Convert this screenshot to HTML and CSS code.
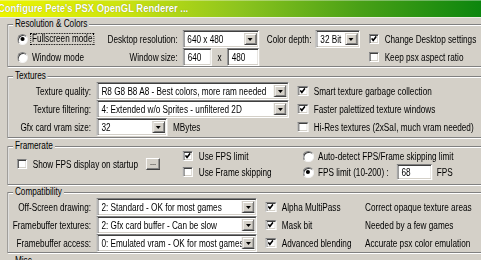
FILE: index.html
```html
<!DOCTYPE html>
<html>
<head>
<meta charset="utf-8">
<title>Configure Pete's PSX OpenGL Renderer</title>
<link rel="stylesheet" href="styles.css">
</head>
<body>
<div class="win">
  <div class="titlebar"><span class="title">Configure Pete's PSX OpenGL Renderer ...</span></div>
  <div class="client">

    <section class="group g-res">
      <span class="legend">Resolution &amp; Colors</span>
      <div class="grid res-grid">
        <div class="opt ro pl"><span class="radio on"></span><span class="focus">Fullscreen mode</span></div>
        <span class="lbl">Desktop resolution:</span>
        <div class="combo w-res"><span class="val">640 x 480</span><span class="arrow"></span></div>
        <span class="lbl lbl-depth">Color depth:</span>
        <div class="combo w-depth"><span class="val">32 Bit</span><span class="arrow"></span></div>
        <div class="opt"><span class="check on"><svg viewBox="0 0 8 8"><path d="M1.2 3.4 L3.1 5.4 L6.9 1.3"/></svg></span>Change Desktop settings</div>

        <div class="opt ro pl"><span class="radio"></span><span class="txt">Window mode</span></div>
        <span class="lbl">Window size:</span>
        <div class="pair"><span class="edit w-640">640</span><span class="x">x</span><span class="edit w-480">480</span></div>
        <span></span>
        <span></span>
        <div class="opt"><span class="check"></span>Keep psx aspect ratio</div>
      </div>
    </section>

    <section class="group g-tex">
      <span class="legend">Textures</span>
      <div class="grid tex-grid">
        <span class="lbl">Texture quality:</span>
        <div class="combo w-wide"><span class="val">R8 G8 B8 A8 - Best colors, more ram needed</span><span class="arrow"></span></div>
        <div class="opt"><span class="check on"><svg viewBox="0 0 8 8"><path d="M1.2 3.4 L3.1 5.4 L6.9 1.3"/></svg></span>Smart texture garbage collection</div>

        <span class="lbl">Texture filtering:</span>
        <div class="combo w-wide"><span class="val">4: Extended w/o Sprites - unfiltered 2D</span><span class="arrow"></span></div>
        <div class="opt"><span class="check on"><svg viewBox="0 0 8 8"><path d="M1.2 3.4 L3.1 5.4 L6.9 1.3"/></svg></span>Faster palettized texture windows</div>

        <span class="lbl">Gfx card vram size:</span>
        <div class="inline"><div class="combo w-vram"><span class="val">32</span><span class="arrow"></span></div><span class="unit">MBytes</span></div>
        <div class="opt"><span class="check"></span>Hi-Res textures (2xSaI, much vram needed)</div>
      </div>
    </section>

    <section class="group g-fps">
      <span class="legend">Framerate</span>
      <div class="grid fps-grid">
        <div class="opt pl span2"><span class="check"></span><span class="txt">Show FPS display on startup</span><span class="btn">...</span></div>
        <div class="opt"><span class="check on"><svg viewBox="0 0 8 8"><path d="M1.2 3.4 L3.1 5.4 L6.9 1.3"/></svg></span>Use FPS limit</div>
        <div class="opt ro"><span class="radio"></span>Auto-detect FPS/Frame skipping limit</div>
        <div class="opt"><span class="check"></span>Use Frame skipping</div>
        <div class="opt ro"><span class="radio on"></span><span class="fpslbl">FPS limit (10-200) :</span><span class="edit w-fps">68</span><span class="unit">FPS</span></div>
      </div>
    </section>

    <section class="group g-cmp">
      <span class="legend">Compatibility</span>
      <div class="grid cmp-grid">
        <span class="lbl">Off-Screen drawing:</span>
        <div class="combo w-cmp"><span class="val">2: Standard - OK for most games</span><span class="arrow"></span></div>
        <div class="opt"><span class="check on"><svg viewBox="0 0 8 8"><path d="M1.2 3.4 L3.1 5.4 L6.9 1.3"/></svg></span>Alpha MultiPass</div>
        <span class="note">Correct opaque texture areas</span>

        <span class="lbl">Framebuffer textures:</span>
        <div class="combo w-cmp"><span class="val">2: Gfx card buffer - Can be slow</span><span class="arrow"></span></div>
        <div class="opt"><span class="check on"><svg viewBox="0 0 8 8"><path d="M1.2 3.4 L3.1 5.4 L6.9 1.3"/></svg></span>Mask bit</div>
        <span class="note">Needed by a few games</span>

        <span class="lbl">Framebuffer access:</span>
        <div class="combo w-cmp"><span class="val">0: Emulated vram - OK for most games</span><span class="arrow"></span></div>
        <div class="opt"><span class="check on"><svg viewBox="0 0 8 8"><path d="M1.2 3.4 L3.1 5.4 L6.9 1.3"/></svg></span>Advanced blending</div>
        <span class="note">Accurate psx color emulation</span>
      </div>
    </section>

    <section class="group g-misc">
      <span class="legend">Misc</span>
    </section>

  </div>
</div>
</body>
</html>
```

FILE: styles.css
```css
/* The dialog is laid out at its natural width and squeezed horizontally
   by 0.82 as a whole, like the reference screenshot. */
* { box-sizing: border-box; }

html, body {
  margin: 0;
  padding: 0;
}

body {
  width: 481px;
  height: 260px;
  overflow: hidden;
  background: #d4d0c8;
  color: #000;
  font-family: "Liberation Sans", Arial, sans-serif;
  font-size: 10px;
  line-height: 11px;
}

.win {
  width: 587px;
  transform: scaleX(0.82);
  transform-origin: 0 0;
}

/* ---------- title bar ---------- */
.titlebar {
  height: 18px;
  display: flex;
  align-items: center;
  background: linear-gradient(90deg, #ecf400 0%, #cce410 25%, #8cc41e 50%, #48a016 75%, #0c860e 100%);
  box-shadow: inset 0 1px 0 rgba(255, 255, 255, 0.35);
  border-bottom: 1px solid #eceee2;
  overflow: hidden;
}

.title {
  margin-left: -2.4px;
  font-weight: bold;
  font-size: 11.5px;
  color: #fff;
  white-space: nowrap;
  text-shadow: 0 0 1px rgba(60, 70, 0, 0.55);
}

/* ---------- client area ---------- */
.client {
  padding: 6px 0 0 8.5px;
}

.group {
  position: relative;
  width: 760px;
  border: 1px solid #808080;
  box-shadow: 1px 1px 0 #fff, inset 1px 1px 0 #fff;
}

.legend {
  position: absolute;
  top: -7px;
  left: 6.3px;
  padding: 0 2.4px;
  background: #d4d0c8;
  white-space: nowrap;
  line-height: 11px;
}

.g-res { padding: 5px 0 0 0; margin-bottom: 9px; }
.g-tex { padding: 5px 0 1px 0; margin-bottom: 8px; }
.g-fps { padding: 1px 0 4px 0; margin-bottom: 7px; }
.g-cmp { padding: 5px 0 0 0; margin-bottom: 8px; }
.g-misc { height: 30px; }

.grid {
  display: grid;
  align-items: center;
  grid-auto-rows: 18px;
}

.res-grid { grid-template-columns: 116px 97.6px 93.9px 68.3px 64.6px auto; }
.tex-grid { grid-template-columns: 108.8px 243.9px auto; }
.fps-grid { grid-template-columns: 213.7px 146.3px auto; grid-auto-rows: 16px; }
.cmp-grid { grid-template-columns: 108.8px 206.1px 120.7px auto; }

.span2 { grid-row: span 2; }

.pl { padding-left: 11.2px; }

.lbl {
  text-align: right;
  white-space: nowrap;
  padding-right: 7.3px;
}

.res-grid .lbl { padding-right: 6.4px; }
.res-grid .lbl-depth { padding-right: 5.5px; }

.opt {
  display: flex;
  align-items: center;
  gap: 7px;
  white-space: nowrap;
}

.opt.ro { gap: 5px; }

.tex-grid .opt { padding-left: 1.2px; }

.note { white-space: nowrap; }

.focus {
  border: 1px dotted #000;
  padding: 0 1.2px;
  margin-left: -2.4px;
  line-height: 10px;
}

.txt { white-space: nowrap; }

/* ---------- controls ---------- */
.combo, .edit {
  height: 18px;
  background: #fff;
  border: 1px solid;
  border-color: #808080 #fff #fff #808080;
  box-shadow: inset 1px 1px 0 #404040, inset -1px -1px 0 #d4d0c8;
}

.combo {
  display: flex;
  padding: 2px;
}

.combo .val {
  flex: 1;
  min-width: 0;
  display: flex;
  align-items: center;
  padding-left: 2.4px;
  white-space: nowrap;
  overflow: hidden;
}

.combo .arrow {
  flex: none;
  width: 15px;
  background: #d4d0c8;
  border: 1px solid;
  border-color: #d4d0c8 #404040 #404040 #d4d0c8;
  box-shadow: inset 1px 1px 0 #fff, inset -1px -1px 0 #808080;
  display: flex;
  align-items: center;
  justify-content: center;
}

.combo .arrow::after {
  content: "";
  border-left: 3.7px solid transparent;
  border-right: 3.7px solid transparent;
  border-top: 3px solid #000;
}

.edit {
  display: flex;
  align-items: center;
  padding-left: 4.8px;
}

.w-res { width: 92.7px; }
.w-depth { width: 53.7px; }
.w-wide { width: 234.1px; }
.w-vram { width: 85.4px; }
.w-cmp { width: 195.1px; }

.pair {
  display: flex;
  align-items: center;
}

.w-640 { width: 35.4px; }
.w-480 { width: 39px; }
.x { width: 18.3px; text-align: center; }

.inline {
  display: flex;
  align-items: center;
}

.unit { margin-left: 7.3px; }

.fpslbl { width: 91px; }
.w-fps { width: 42.7px; height: 16px; }
.opt.ro .unit { margin-left: 1px; }

.check {
  flex: none;
  width: 12.2px;
  height: 10px;
  background: #fff;
  border: 1px solid;
  border-color: #808080 #fff #fff #808080;
  box-shadow: inset 1px 1px 0 #404040, inset -1px -1px 0 #d4d0c8;
  display: flex;
}

.check svg {
  width: 10px;
  height: 8px;
  fill: none;
  stroke: #000;
  stroke-width: 1.7;
}

.radio {
  flex: none;
  position: relative;
  width: 13.4px;
  height: 11px;
  border-radius: 50%;
  background: #fff;
  border: 1px solid;
  border-color: #808080 #f4f4f4 #f4f4f4 #808080;
  box-shadow: inset 1px 1px 0 #404040;
}

.radio.on::after {
  content: "";
  position: absolute;
  left: 3px;
  top: 2.5px;
  width: 4.9px;
  height: 4px;
  border-radius: 50%;
  background: #000;
}

.btn {
  flex: none;
  width: 17px;
  height: 12px;
  margin-left: 2.8px;
  background: #d4d0c8;
  border: 1px solid;
  border-color: #fff #404040 #404040 #fff;
  box-shadow: inset -1px -1px 0 #808080;
  font-size: 9px;
  line-height: 7px;
  text-align: center;
}
```
